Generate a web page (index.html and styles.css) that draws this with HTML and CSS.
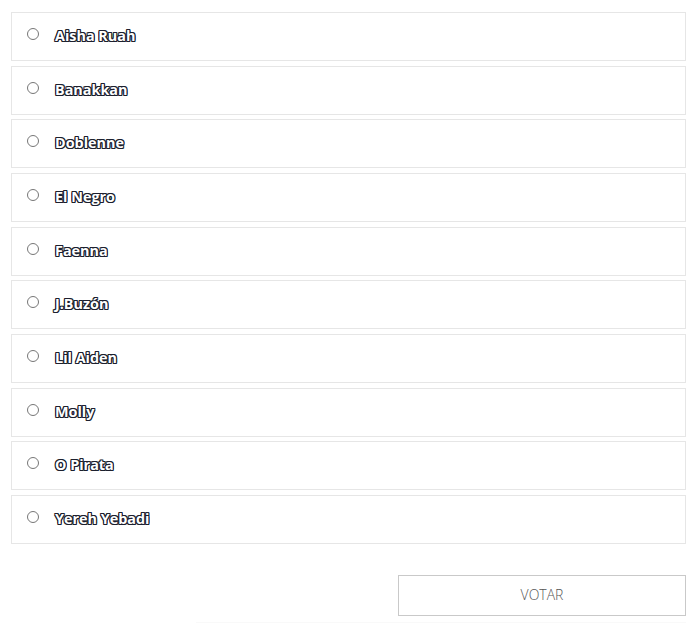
FILE: index.html
```html
<!DOCTYPE html>
<html lang="es">
<head>
<meta charset="utf-8">
<link rel="stylesheet" href="styles.css">
</head>
<body>
<div class="poll">
  <p class="intro">Vota a tu artista favorito y marca su foto para elegir a tu preferido</p>
  <ul class="options">
    <li class="option"><label><input type="radio" name="v"><span class="name">Aisha Ruah</span></label></li>
    <li class="option"><label><input type="radio" name="v"><span class="name">Banakkan</span></label></li>
    <li class="option"><label><input type="radio" name="v"><span class="name">Doblenne</span></label></li>
    <li class="option"><label><input type="radio" name="v"><span class="name">El Negro</span></label></li>
    <li class="option"><label><input type="radio" name="v"><span class="name">Faenna</span></label></li>
    <li class="option"><label><input type="radio" name="v"><span class="name">J.Buzón</span></label></li>
    <li class="option"><label><input type="radio" name="v"><span class="name">Lil Aiden</span></label></li>
    <li class="option"><label><input type="radio" name="v"><span class="name">Molly</span></label></li>
    <li class="option"><label><input type="radio" name="v"><span class="name">O Pirata</span></label></li>
    <li class="option"><label><input type="radio" name="v"><span class="name">Yereh Yebadi</span></label></li>
  </ul>
  <div class="actions">
    <button class="vote" type="button">VOTAR</button>
  </div>
  <div class="footer-line"></div>
</div>
</body>
</html>
```
FILE: styles.css
```css
html, body {
  margin: 0;
  padding: 0;
  background: #fff;
  overflow: hidden;
}
body {
  font-family: "Open Sans", "Liberation Sans", sans-serif;
}
.poll {
  padding: 0 11px 0 11px;
}
.intro {
  margin: -19px 0 0 0;
  height: 31px;
  line-height: 20px;
  font-size: 14px;
  color: #555;
  text-align: center;
  padding-left: 60px;
  box-sizing: border-box;
  white-space: nowrap;
}
.options {
  list-style: none;
  margin: 0;
  padding: 0;
  display: flex;
  flex-direction: column;
  gap: 4.67px;
}
.option {
  height: 49px;
  box-sizing: border-box;
  border: 1px solid #e6e6e6;
  background: #fff;
}
.option label {
  display: flex;
  align-items: center;
  height: 100%;
  padding-left: 15px;
  cursor: pointer;
}
.option input {
  width: 12px;
  height: 12px;
  margin: 0 0 5px 0;
  flex: none;
}
.name {
  margin: 0 0 2px 16px;
  font-weight: 700;
  font-size: 14.4px;
  color: #fff;
  letter-spacing: 0;
  text-shadow:
    1px 0 0 #1c1f2e,
    -1px 0 0 #1c1f2e,
    0 1px 0 #1c1f2e,
    0 -1px 0 #1c1f2e,
    1px 1px 0 #1c1f2e,
    -1px -1px 0 #1c1f2e,
    1px -1px 0 #1c1f2e,
    -1px 1px 0 #1c1f2e;
}
.actions {
  display: flex;
  justify-content: flex-end;
  padding-top: 31px;
}
.vote {
  width: 288px;
  height: 41px;
  box-sizing: border-box;
  border: 1px solid #c9c9c9;
  background: #fff;
  font-family: "Open Sans", "Liberation Sans", sans-serif;
  font-size: 14px;
  font-weight: 300;
  color: #555;
  padding: 0 0 2px 0;
  cursor: pointer;
}
.footer-line {
  margin: 6px 0 0 185px;
  height: 2px;
  background: #f9f9f9;
}
```
